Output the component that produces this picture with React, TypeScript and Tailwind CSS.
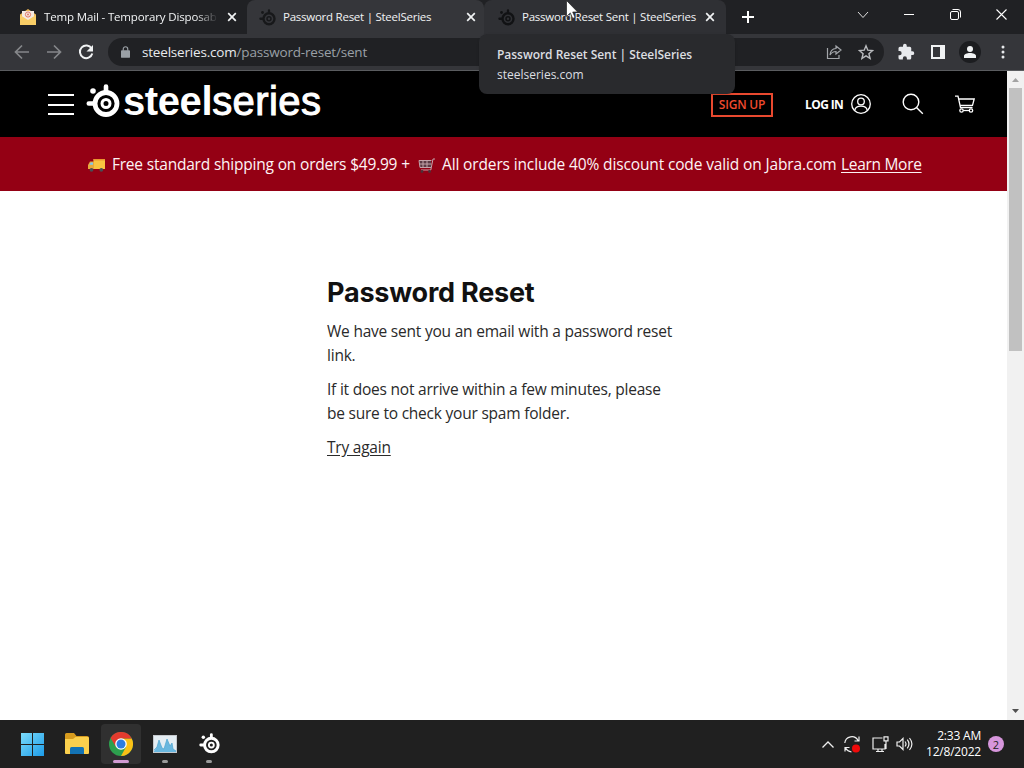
import React from "react";

type IconProps = { className?: string };

const SEGOE = "font-['Open_Sans','Noto_Sans',sans-serif]";

function SteelMark({ className = "" }: IconProps) {
  return (
    <svg viewBox="0 0 34 34" className={className} fill="none" stroke="currentColor">
      <circle cx="20" cy="19.5" r="11" strokeWidth="4.8" />
      <circle cx="20" cy="19.5" r="4" strokeWidth="3" />
      <path d="M20 2.6v5M2.8 19.5h5" strokeWidth="4.6" strokeLinecap="round" />
      <circle cx="7" cy="7" r="2.8" fill="currentColor" stroke="none" />
    </svg>
  );
}

function Close({ className = "" }: IconProps) {
  return (
    <svg viewBox="0 0 10 10" className={className} stroke="currentColor" strokeWidth="1.7" fill="none">
      <path d="M1.2 1.2l7.6 7.6M8.8 1.2L1.2 8.8" />
    </svg>
  );
}

function TabStrip() {
  return (
    <div className="flex h-[34px] items-stretch bg-[#202124] text-[11.5px] tracking-[-0.25px] text-[#f1f3f4]">
      <div className="flex w-[247px] items-center pl-[20px]">
        <svg viewBox="0 0 16 16" className="size-4">
          <path d="M0 5.5L8 0l8 5.5V16H0z" fill="#efb957" />
          <path d="M2 2h12v9H2z" fill="#f5e9df" />
          <circle cx="8" cy="5.5" r="2.6" fill="none" stroke="#df7869" strokeWidth="1" />
          <circle cx="8" cy="5.5" r="1" fill="#df7869" />
          <path d="M0 6l8 5 8-5v10H0z" fill="#f8cd66" />
        </svg>
        <span className="ml-2 w-[174px] overflow-hidden tracking-[-0.15px] whitespace-nowrap [mask-image:linear-gradient(to_right,#000_152px,transparent)]">
          Temp Mail - Temporary Disposab
        </span>
        <Close className="ml-[9px] size-[10px]" />
      </div>
      <div className="flex w-[237px] items-center rounded-t-lg bg-[#35363a] pl-[12px]">
        <SteelMark className="size-[17px] text-[#17181a]" />
        <span className="ml-[7px] w-[172px] whitespace-nowrap">Password Reset | SteelSeries</span>
        <Close className="ml-[11px] size-[10px]" />
      </div>
      <div className="flex w-[242px] items-center rounded-t-lg bg-[#2f3034] pl-[14px]">
        <SteelMark className="size-[17px] text-[#111214]" />
        <span className="ml-[7px] w-[176px] whitespace-nowrap">Password Reset Sent | SteelSeries</span>
        <Close className="ml-[7px] size-[10px]" />
      </div>
      <div className="flex flex-1 items-center pl-[16px]">
        <svg viewBox="0 0 12 12" className="size-3" stroke="#fff" strokeWidth="2">
          <path d="M6 0v12M0 6h12" />
        </svg>
        <svg viewBox="0 0 12 8" className="mt-[-5px] ml-[103px] h-2 w-3" stroke="#ddd" fill="none">
          <path d="M1 1l5 5.5L11 1" />
        </svg>
        <div className="mt-[-5px] ml-[35px] h-px w-[10px] bg-white" />
        <svg viewBox="0 0 11 11" className="mt-[-5px] ml-[36px] size-[11px]" stroke="#fff" fill="none">
          <rect x=".5" y="2.5" width="8" height="8" rx="1.5" />
          <path d="M2.5.5H8a2.5 2.5 0 0 1 2.5 2.5v5.5" />
        </svg>
        <svg viewBox="0 0 11 11" className="mt-[-5px] ml-[35px] size-[11px]" stroke="#fff" strokeWidth="1.1">
          <path d="M.5.5l10 10M10.5.5l-10 10" />
        </svg>
      </div>
    </div>
  );
}

function Toolbar() {
  return (
    <div className="flex h-[37px] items-center border-b border-[#5a5c5f] bg-[#35363a] pl-[14px] text-[#e8eaed]">
      <svg viewBox="0 0 16 16" className="size-4" stroke="#85878a" strokeWidth="1.7" fill="none">
        <path d="M15 8H2M8 1.5L1.5 8 8 14.5" />
      </svg>
      <svg viewBox="0 0 16 16" className="ml-4 size-4" stroke="#85878a" strokeWidth="1.7" fill="none">
        <path d="M1 8h13M8 1.5L14.5 8 8 14.5" />
      </svg>
      <svg viewBox="0 0 16 16" className="ml-4 size-4" fill="none">
        <path d="M13.6 4.5A6.3 6.3 0 1 0 14.3 9.5" stroke="#f1f3f4" strokeWidth="2" />
        <path d="M15 1v6.5H8.5z" fill="#f1f3f4" />
      </svg>
      <div className="ml-[14px] flex h-[28px] w-[776px] items-center rounded-full bg-[#202124] pl-[13px] text-[13.5px] tracking-[-0.19px]">
        <svg viewBox="0 0 10 13" className="h-3 w-[9px]">
          <rect y="4.5" width="10" height="8.5" rx="1" fill="#9aa0a6" />
          <path d="M2.5 5V3.2a2.5 2.5 0 0 1 5 0V5" stroke="#9aa0a6" strokeWidth="1.3" fill="none" />
        </svg>
        <span className="ml-[12px] whitespace-nowrap">
          steelseries.com<span className="text-[#9aa0a6]">/password-reset/sent</span>
        </span>
        <div className="flex flex-1 items-center justify-end gap-[16px] pr-[10px]">
          <svg viewBox="0 0 16 16" className="size-4" stroke="#a2a5a9" strokeWidth="1.2" fill="none">
            <path d="M1.5 4v10.5h11.500V11" />
            <path d="M10 2l5 4-5 4V7.5C7 7.5 5.5 8.5 4 11c.3-4 2.5-6.3 6-6.5z" />
          </svg>
          <svg viewBox="0 0 16 16" className="size-4" stroke="#b9bbbe" strokeWidth="1.4" fill="none">
            <path d="M8 1.8l1.8 4.4 4.8.4-3.7 3.1 1.2 4.7L8 11.9l-4.1 2.5 1.2-4.7L1.4 6.6l4.8-.4z" />
          </svg>
        </div>
      </div>
      <svg viewBox="0 0 24 24" className="ml-[13px] size-[18px]" fill="#e8eaed">
        <path d="M20.5 11H19V7a2 2 0 0 0-2-2h-4V3.5a2.5 2.5 0 0 0-5 0V5H4a2 2 0 0 0-2 2v3.8h1.5a2.7 2.7 0 0 1 0 5.4H2V20a2 2 0 0 0 2 2h3.8v-1.5a2.7 2.7 0 0 1 5.4 0V22H17a2 2 0 0 0 2-2v-4h1.5a2.5 2.5 0 0 0 0-5z" />
      </svg>
      <svg viewBox="0 0 14 14" className="ml-[16px] size-[14px]">
        <path d="M1 1h12v12H1z" fill="none" stroke="#f1f3f4" strokeWidth="2" />
        <path d="M9 0h5v14H9z" fill="#f1f3f4" />
      </svg>
      <div className="ml-[14px] flex size-[22px] items-center justify-center rounded-full bg-[#1c1d20]">
        <svg viewBox="0 0 12 12" className="size-3" fill="#f1f3f4">
          <circle cx="6" cy="3" r="3" />
          <path d="M0 12v-2c0-2 3-3 6-3s6 1 6 3v2z" />
        </svg>
      </div>
      <svg viewBox="0 0 4 14" className="ml-[20px] h-[14px] w-1" fill="#e8eaed">
        <circle cx="2" cy="2" r="1.5" />
        <circle cx="2" cy="7" r="1.5" />
        <circle cx="2" cy="12" r="1.5" />
      </svg>
    </div>
  );
}

function SiteHeader() {
  return (
    <header className="flex h-[66px] items-center bg-black pl-[48px] text-white">
      <svg viewBox="0 0 26 21" className="mt-[1px] h-[21px] w-[26px]" stroke="#fff" strokeWidth="2">
        <path d="M0 1h26M0 11h26M0 20h26" />
      </svg>
      <SteelMark className="mt-[-6px] ml-[12px] size-[34px]" />
      <div className="mt-[-6px] ml-[3px] w-[588px] font-['Liberation_Sans',Arial,sans-serif] text-[40px] leading-[40px] whitespace-nowrap">
        <span className="font-bold tracking-[-0.4px]">steel</span>
        <span className="tracking-[0.4px] [-webkit-text-stroke:1px_#fff]">series</span>
      </div>
      <div className="mt-[2px] flex h-[24px] w-[62px] items-center justify-center border-2 border-[#e8492f] text-[12px] font-semibold tracking-[-0.2px] whitespace-nowrap text-[#f04a2e]">
        SIGN UP
      </div>
      <span className="mt-[2px] ml-[32px] w-[39px] text-[12px] font-bold tracking-[-0.6px] whitespace-nowrap">LOG IN</span>
      <svg viewBox="0 0 20 20" className="ml-[7px] size-5" stroke="#fff" strokeWidth="1.3" fill="none">
        <circle cx="10" cy="10" r="9.3" />
        <circle cx="10" cy="7.5" r="3.3" />
        <path d="M3.8 16.5c.3-3 2.5-4.3 6.2-4.3s5.9 1.3 6.2 4.3" />
      </svg>
      <svg viewBox="0 0 22 22" className="ml-[31px] size-[22px]" stroke="#fff" strokeWidth="1.4" fill="none">
        <circle cx="9" cy="9" r="7.8" />
        <path d="M14.5 14.5l6.3 6.3" />
      </svg>
      <svg viewBox="0 0 20 19" className="mt-[1px] ml-[31px] h-[19px] w-5" stroke="#fff" strokeWidth="1.3" fill="none">
        <path d="M0 1.2h3l2.5 11.3h12M3.8 4h15.400l-1.700 6.300H5.200" />
        <circle cx="6.5" cy="15.5" r="1.7" />
        <circle cx="16" cy="15.5" r="1.7" />
        <path d="M8.2 15.5h6" />
      </svg>
    </header>
  );
}

function Banner() {
  return (
    <div className="flex h-[54px] items-center bg-[#940014] pt-[2px] pl-[88px] text-[15.5px] whitespace-nowrap text-[#fdf3f4]">
      <svg viewBox="0 0 17 13" className="h-[13px] w-[17px]">
        <path d="M5.5 0H17v10H5.5z" fill="#f9c440" />
        <path d="M5.5 0H17v1.5H5.5z" fill="#e9962e" />
        <path d="M0 6l2-3.5h4V10H0z" fill="#e9a83a" />
        <path d="M1.300 5.800L2.600 3.500H5v2.300z" fill="#7bc8ee" />
        <circle cx="3.5" cy="10.8" r="1.9" fill="#4a4d55" />
        <circle cx="13.3" cy="10.8" r="1.9" fill="#4a4d55" />
      </svg>
      <span className="ml-[7px] w-[299px] tracking-[-0.23px] [word-spacing:0.2px]">Free standard shipping on orders $49.99 +</span>
      <svg viewBox="0 0 17 15" className="ml-[7px] h-[15px] w-[17px]" fill="none">
        <path d="M1 2.500h12v7H2z" fill="#5b3a44" />
        <path d="M17 1h-2l-2.200 11H3M1 2.500h12.500M1.500 6h12M2 9.500h11M1 2.500l1 7M5 2.500v7M9 2.500v7" stroke="#c3a3aa" />
        <circle cx="4" cy="13.5" r="1.4" fill="#4c3038" />
        <circle cx="11.5" cy="13.5" r="1.4" fill="#4c3038" />
      </svg>
      <span className="ml-[7px] w-[399px] tracking-[-0.14px]">All orders include 40% discount code valid on Jabra.com</span>
      <a className="tracking-[-0.3px] underline underline-offset-2">Learn More</a>
    </div>
  );
}

function Content() {
  return (
    <main className="flex flex-1 flex-col bg-white pl-[327px] text-[15.5px] leading-6 tracking-[-0.22px] text-[#2a2a2a]">
      <h1 className="mt-[84px] font-['Inter',sans-serif] text-[27px] leading-[36px] font-bold tracking-[-0.22px] whitespace-nowrap text-[#111]">
        Password Reset
      </h1>
      <p className="mt-[8px] whitespace-nowrap">
        We have sent you an email with a password reset
        <br />
        link.
      </p>
      <p className="mt-[10px] whitespace-nowrap">
        If it does not arrive within a few minutes, please
        <br />
        be sure to check your spam folder.
      </p>
      <a className="mt-[10px] self-start underline underline-offset-2">Try again</a>
    </main>
  );
}

function Scrollbar() {
  return (
    <div className="flex w-[17px] flex-col items-center bg-[#f1f1f1]">
      <svg viewBox="0 0 17 17" className="size-[17px]" fill="#a3a3a3">
        <path d="M5 11l3.500-4L12 11z" />
      </svg>
      <div className="h-[263px] w-[13px] bg-[#c1c1c1]" />
      <svg viewBox="0 0 17 17" className="mt-auto size-[17px]" fill="#505050">
        <path d="M5 6l3.500 4L12 6z" />
      </svg>
    </div>
  );
}

function Taskbar() {
  return (
    <footer className="flex h-12 items-center bg-[#202020] pl-[21px] text-white">
      <svg viewBox="0 0 23 23" className="size-[23px]">
        <defs>
          <linearGradient id="win" x1="0" y1="0" x2="1" y2="1">
            <stop offset="0" stopColor="#7bdcfb" />
            <stop offset="1" stopColor="#1c9be8" />
          </linearGradient>
        </defs>
        <path d="M0 0h11v11H0zM12 0h11v11H12zM0 12h11v11H0zM12 12h11v11H12z" fill="url(#win)" />
      </svg>
      <svg viewBox="0 0 24 22" className="ml-[21px] h-[22px] w-6">
        <path d="M0 1.500Q0 0 1.500 0H9l2.500 3H22q2 0 2 2v15H0z" fill="#d79b1e" />
        <path d="M0 6h8l2.500-2H23q1 0 1 1.500V20q0 1-1 1H1q-1 0-1-1z" fill="#fbd04d" />
        <path d="M5 21v-5.500q0-1.500 1.500-1.500h11q1.500 0 1.500 1.500V21z" fill="#1373b5" />
      </svg>
      <div className="ml-[12px] flex h-10 w-10 flex-col items-center rounded bg-[#303030]">
        <svg viewBox="0 0 24 24" className="mt-2 size-6">
          <circle cx="12" cy="12" r="12" fill="#2da04e" />
          <path d="M12 6.500H22.700A12 12 0 0 1 12 24L17 15z" fill="#fbc116" />
          <path d="M1.600 6A12 12 0 0 1 22.700 6.500H12L7 15z" fill="#e33b2e" />
          <circle cx="12" cy="12" r="5.8" fill="#fff" />
          <circle cx="12" cy="12" r="4.5" fill="#2d7de1" />
        </svg>
        <div className="mt-1 h-[3px] w-4 rounded-full bg-[#d29bd3]" />
      </div>
      <div className="ml-[12px] flex h-10 w-6 flex-col items-center">
        <svg viewBox="0 0 24 18" className="mt-[11px] h-[18px] w-6">
          <path d="M0 0h24v18H0z" fill="#c5c9cd" />
          <path d="M1 1h22v16H1z" fill="#e4edf3" />
          <path d="M1 16l3-4 2-7 3 8 2 1 3-10 3 7 2-3 1 6 3 2v1H1z" fill="#69b7df" />
          <path d="M1 15l3-3 2-7 3 8 2 1 3-10 3 7 2-3 1 6 3 2" stroke="#4ca3cf" strokeWidth=".7" fill="none" />
        </svg>
        <div className="mt-[7px] h-[3px] w-[6px] rounded-full bg-[#9b9b9b]" />
      </div>
      <div className="ml-[22px] flex h-10 w-5 flex-col items-center">
        <SteelMark className="mt-[9px] size-[21px]" />
        <div className="mt-[6px] h-[3px] w-[6px] rounded-full bg-[#9b9b9b]" />
      </div>
      <svg viewBox="0 0 12 7" className="ml-[603px] h-[7px] w-3" stroke="#eee" strokeWidth="1.3" fill="none">
        <path d="M.5 6.500L6 1l5.500 5.500" />
      </svg>
      <svg viewBox="0 0 17 17" className="ml-[10px] size-[17px]" stroke="#eee" strokeWidth="1.2" fill="none">
        <path d="M.8 7A7 7 0 0 1 14 4.500M15 0.500v4.500h-4.500M1 15.500v-4h4.500M1.500 12a8 8 0 0 0 6 4" />
        <circle cx="12" cy="12.5" r="4" fill="#f00a0a" stroke="none" />
      </svg>
      <svg viewBox="0 0 17 17" className="ml-[11px] size-[17px]" stroke="#eee" strokeWidth="1.2" fill="none">
        <path d="M10.500 2H1v11h12V8M4 15.500h8M6 13v2.500M10 13v2.500M12 .8h4v4h-4zM14 5v8" />
      </svg>
      <svg viewBox="0 0 17 14" className="ml-[7px] h-[14px] w-[17px]" stroke="#eee" strokeWidth="1.2" fill="none">
        <path d="M1 5v4h2.500L7 12.500v-11L3.500 5zM9 4.500q2 2.500 0 5M11.300 2.700q3.300 4.300 0 8.600M13.500 1q4.800 6 0 12" />
      </svg>
      <div className="mt-[-1px] ml-[10px] w-[58px] text-right text-[12px] leading-4 tracking-[-0.2px] whitespace-nowrap">
        2:33 AM
        <br />
        12/8/2022
      </div>
      <div className="ml-[7px] flex size-4 items-center justify-center rounded-full bg-[#d796dc] text-[11px] leading-none text-[#222]">
        2
      </div>
    </footer>
  );
}

export default function App() {
  return (
    <div className={"relative flex h-[768px] w-[1024px] flex-col overflow-hidden " + SEGOE}>
      <TabStrip />
      <Toolbar />
      <div className="flex min-h-0 flex-1">
        <div className="flex w-[1007px] flex-col">
          <SiteHeader />
          <Banner />
          <Content />
        </div>
        <Scrollbar />
      </div>
      <Taskbar />
      <div className="absolute top-[34px] left-[479px] h-[60px] w-[256px] rounded-lg bg-[#292a2d] pt-[11px] pl-[18px] text-[12px] leading-5 whitespace-nowrap text-[#dcdee1] shadow">
        <div className="font-semibold tracking-[-0.03px]">Password Reset Sent | SteelSeries</div>
        <div>steelseries.com</div>
      </div>
      <svg viewBox="0 0 12 19" className="absolute top-0 left-[566px] h-[19px] w-3">
        <path d="M.5.500v16l3.800-3.600 2.400 5.500 2.400-1-2.400-5.400h5z" fill="#fff" stroke="#222" strokeWidth=".7" />
      </svg>
    </div>
  );
}
